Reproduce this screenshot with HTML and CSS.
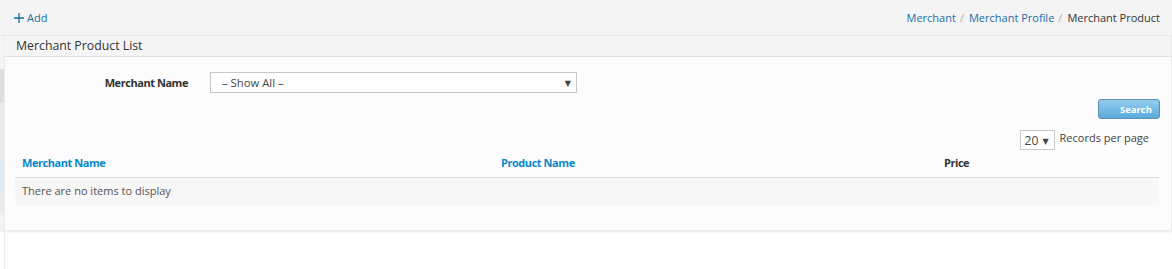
FILE: index.html
```html
<!DOCTYPE html>
<html>
<head>
<meta charset="utf-8">
<link rel="stylesheet" href="styles.css">
</head>
<body>
<div class="topbar">
  <a class="add" href="#"><svg class="plus" width="10" height="10" viewBox="0 0 10 10"><path d="M5 0v10M0 5h10" stroke="#1a6fa8" stroke-width="1.3"/></svg>Add</a>
  <nav class="crumbs">
    <a href="#">Merchant</a><span class="sep">/</span>
    <a href="#">Merchant Profile</a><span class="sep">/</span>
    <span class="current">Merchant Product</span>
  </nav>
</div>
<div class="layout">
  <div class="strip">
    <div class="s1"></div><div class="s2"></div><div class="s3"></div><div class="s4"></div><div class="s5"></div><div class="s6"></div>
  </div>
  <div class="main">
    <div class="panel">
      <div class="panel-head">Merchant Product List</div>
      <div class="panel-body">
        <div class="filter">
          <label class="flabel">Merchant Name</label>
          <div class="select wide"><span>– Show All –</span><span class="arrow">▼</span></div>
        </div>
        <div class="actions"><button class="search">Search</button></div>
        <div class="pager"><div class="select small"><span>20</span><span class="arrow">▼</span></div><span class="rpp">Records per page</span></div>
        <table class="grid">
          <colgroup><col class="c1"><col class="c2"><col class="c3"></colgroup>
          <thead><tr><th><a href="#">Merchant Name</a></th><th><a href="#">Product Name</a></th><th class="plain">Price</th></tr></thead>
          <tbody><tr><td colspan="3">There are no items to display</td></tr></tbody>
        </table>
      </div>
    </div>
  </div>
</div>
</body>
</html>
```
FILE: styles.css
```css
html, body { margin: 0; padding: 0; background: #fff; }
body { font-family: "Open Sans", "DejaVu Sans", sans-serif; font-size: 11px; color: #333; }
a { text-decoration: none; color: #1a6fa8; }

.topbar {
  height: 35px;
  background: #f4f4f4;
  border-bottom: 1px solid #e8e8e8;
  display: flex;
  align-items: center;
  justify-content: space-between;
  padding: 0 12px 0 14px;
}
.add { display: flex; align-items: center; gap: 3px; font-size: 11px; color: #1a6fa8; }
.plus { display: block; }
.crumbs { display: flex; align-items: center; font-size: 11px; }
.crumbs .sep { color: #aaa; margin: 0 5px 0 4px; }
.crumbs .current { color: #333; }

.layout { display: flex; }
.strip { width: 4px; display: flex; flex-direction: column; }
.s1 { height: 33px; background: #f5f5f5; }
.s2 { height: 34px; background: #dfdfdf; }
.s3 { height: 57px; background: #ebebeb; }
.s4 { height: 30px; background: #dcebf7; }
.s5 { height: 25px; background: #ebebeb; }
.s6 { height: 17px; background: #f4f4f4; }

.main { flex: 1; border-left: 1px solid #ececec; min-height: 233px; }
.panel { background: #fcfcfc; border-right: 1px solid #ececec; box-shadow: 0 2px 2px #ececec; }
.panel-head {
  height: 20px;
  line-height: 20px;
  background: #f5f5f5;
  border-bottom: 1px solid #e2e2e2;
  padding-left: 11px;
  font-size: 12.3px;
  color: #333;
}
.panel-body { padding: 15px 11px 25px 10px; }

.filter { display: flex; align-items: center; }
.flabel { width: 173px; text-align: right; font-weight: bold; color: #333; margin-right: 22px; letter-spacing: -0.45px; }
.select {
  box-sizing: border-box;
  height: 21px;
  border: 1px solid #c8c8c8;
  background: #fff;
  display: flex;
  align-items: center;
  justify-content: space-between;
  color: #444;
}
.select.wide { width: 367px; padding: 0 5px 0 11px; font-size: 11.3px; }
.arrow { font-size: 8px; color: #444; }
.select.small { width: 35px; height: 20px; padding: 0 5px 0 4px; font-size: 12px; }

.actions { display: flex; justify-content: flex-end; margin-top: 6px; }
.search {
  width: 62px; height: 20px;
  border: 1px solid #5e8fb5;
  border-radius: 3px;
  background: linear-gradient(#93cdee, #5aaadb);
  color: #fff;
  font-family: inherit;
  font-size: 9.5px;
  font-weight: bold;
  text-align: right;
  padding: 0 7px 0 0;
}

.pager { display: flex; justify-content: flex-end; align-items: center; gap: 5px; margin-top: 11px; padding-right: 11px; }
.rpp { color: #444; position: relative; top: -3px; }

.grid { width: 1144px; border-collapse: collapse; table-layout: fixed; margin-top: 1px; }
.c1 { width: 479px; } .c2 { width: 443px; } .c3 { width: 222px; }
.grid th { text-align: left; font-weight: bold; padding: 4px 7px 7px; height: 15px; border-bottom: 1px solid #dcdcdc; letter-spacing: -0.45px; }
.grid th a { color: #0a86c9; }
.grid th.plain { color: #333; }
.grid td { background: #f7f7f7; color: #555; padding: 5px 7px 7px; height: 14px; }
```
